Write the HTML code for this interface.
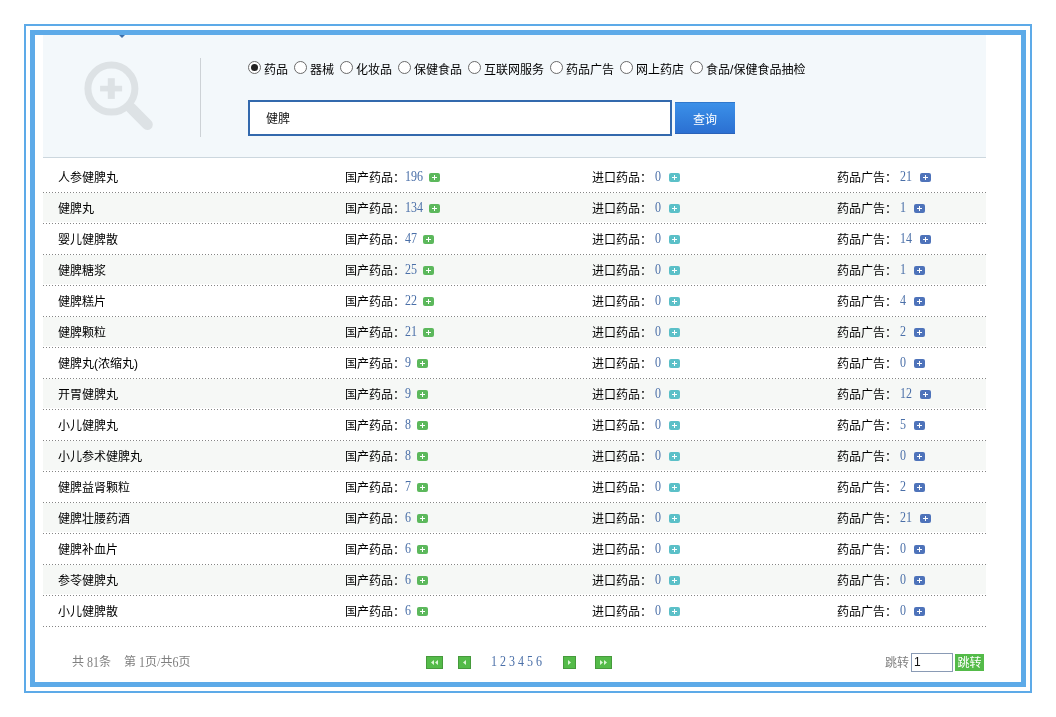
<!DOCTYPE html>
<html lang="zh-CN"><head><meta charset="utf-8"><title>查询</title>
<style>
*{box-sizing:border-box;margin:0;padding:0}
html,body{width:1056px;height:717px;background:#fff;overflow:hidden}
body{font-family:"Liberation Sans","Noto Sans CJK SC",sans-serif;font-size:12px;color:#222;position:relative}
.outer{position:absolute;left:24px;top:24px;width:1008px;height:669px;border:2px solid #5daae8}
.inner{position:absolute;left:30px;top:30px;width:996px;height:657px;border:5px solid #5daae8;background:#fff}
.hd{position:absolute;left:43px;top:35px;width:943px;height:123px;background:#f3f8fb;border-bottom:1px solid #ccd7de}
.tri{position:absolute;left:119px;top:35px;width:0;height:0;border-left:3px solid transparent;border-right:3px solid transparent;border-top:3px solid #3e70aa}
.mag{position:absolute;left:80px;top:57px}
.vl{position:absolute;left:200px;top:58px;width:1px;height:79px;background:#cdd2d6}
.rads{position:absolute;left:242px;top:59px;height:18px;line-height:18px;white-space:nowrap;font-size:12px;color:#000}
.rads label{display:inline-block;vertical-align:top}
.rads label i{font-style:normal;position:relative;top:2px}
.rd{display:inline-block;width:13px;height:13px;border:1px solid #6a6a6a;border-radius:50%;background:#fff;margin:2px 3px 0 6px;vertical-align:top;position:relative}
.rd.on::after{content:"";position:absolute;left:2px;top:2px;width:7px;height:7px;border-radius:50%;background:#222}
.kw{position:absolute;left:248px;top:100px;width:424px;height:36px;border:2px solid #3369ad;background:#fff;padding-left:16px;padding-top:1px;line-height:32px;font-size:12px;color:#111}
.btn{position:absolute;left:675px;top:102px;width:60px;height:32px;background:linear-gradient(#3b90e8,#2b70d2);border-top:1px solid #2f78cc;border-bottom:1px solid #2a62b8;color:#fff;font-size:12px;line-height:34px;text-align:center}
table{position:absolute;left:43px;top:162px;width:943px;border-collapse:collapse;table-layout:fixed}
td{height:31px;background:linear-gradient(to right,#858585 1px,transparent 1px) left bottom/3px 1px repeat-x,linear-gradient(#fff,#fff) left bottom/100% 2px no-repeat;font-size:12px;color:#000;white-space:nowrap;vertical-align:middle;padding:0 0 2px 0}
tr.alt td{background-color:#f6f8f6}
.c1{width:300px;padding-left:15px}
.c2{width:246px;padding-left:2px}
.c3{width:246px;padding-left:3px}
.c4{padding-left:2px}
.c3 a,.c4 a{margin-left:3px}
.c3 .pl,.c4 .pl{margin-left:8px}
td a{font-family:"Liberation Serif",serif;color:#4a6fa8;font-size:12px;display:inline-block;transform:translateY(-0.5px) scaleY(1.14);transform-origin:50% 80%}
.pl{display:inline-block;vertical-align:0px;margin-left:6px}
.pl.g rect{fill:#5cb85c} .pl.t rect{fill:#5bc0c8} .pl.b rect{fill:#4e73ba}
.pg1{position:absolute;left:72px;top:653px;line-height:18px;color:#808080;font-size:12px;white-space:pre}
.pg1 b{font-weight:normal;font-family:"Liberation Serif",serif;display:inline-block;transform:translateY(1.5px) scaleY(1.14);transform-origin:50% 80%}
.pg1 u{text-decoration:none;font-family:"Liberation Serif",serif}
.pg1 span{margin-left:13px}
.nav{position:absolute;top:656px;height:13px;background:#54bb49;border:1px solid #469a3c}
.nums{position:absolute;left:491px;top:654px;line-height:18px;font-family:"Liberation Serif",serif;font-size:12px;color:#4a6fa8;word-spacing:0;white-space:pre;transform:translateY(-0.7px) scaleY(1.13);transform-origin:50% 70%}
.jl{position:absolute;left:885px;top:654px;line-height:18px;color:#808080}
.ji{position:absolute;left:911px;top:653px;width:42px;height:19px;border:1px solid #8a9bb5;background:#fff;font-size:12px;line-height:17px;padding-left:2px;color:#111}
.jb{position:absolute;left:955px;top:654px;width:29px;height:17px;background:#54bb49;color:#fff;font-size:12px;line-height:19px;text-align:center}
.page{position:absolute;left:0;top:0;width:1056px;height:717px;will-change:transform;transform:translateZ(0)}
</style></head><body>
<div class="page">
<div class="outer"></div>
<div class="inner"></div>
<div class="hd"></div>
<div class="tri"></div>
<svg class="mag" width="76" height="76" viewBox="0 0 76 76"><g fill="none" stroke="#dde2e5"><circle cx="31.4" cy="31.6" r="23.5" stroke-width="7"/><path d="M51 51L67.3 67.5" stroke-width="11" stroke-linecap="round"/></g><rect x="20.1" y="28.8" width="22" height="5.6" fill="#dde2e5"/><rect x="27.8" y="21.2" width="7" height="20.7" fill="#dde2e5"/></svg>
<div class="vl"></div>
<div class="rads"><label><span class="rd on"></span><i>药品</i></label><label><span class="rd"></span><i>器械</i></label><label><span class="rd"></span><i>化妆品</i></label><label><span class="rd"></span><i>保健食品</i></label><label><span class="rd"></span><i>互联网服务</i></label><label><span class="rd"></span><i>药品广告</i></label><label><span class="rd"></span><i>网上药店</i></label><label><span class="rd"></span><i>食品/保健食品抽检</i></label></div>
<div class="kw">健脾</div>
<div class="btn">查询</div>
<table>
<tr><td class="c1">人参健脾丸</td><td class="c2">国产药品：<a>196</a><svg class="pl g" width="11" height="9" viewBox="0 0 11 9"><rect width="11" height="9" rx="2" ry="2"/><path d="M5.5 2v5M3 4.5h5" stroke="#fff" stroke-width="1" fill="none"/></svg></td><td class="c3">进口药品：<a>0</a><svg class="pl t" width="11" height="9" viewBox="0 0 11 9"><rect width="11" height="9" rx="2" ry="2"/><path d="M5.5 2v5M3 4.5h5" stroke="#fff" stroke-width="1" fill="none"/></svg></td><td class="c4">药品广告：<a>21</a><svg class="pl b" width="11" height="9" viewBox="0 0 11 9"><rect width="11" height="9" rx="2" ry="2"/><path d="M5.5 2v5M3 4.5h5" stroke="#fff" stroke-width="1" fill="none"/></svg></td></tr>
<tr class="alt"><td class="c1">健脾丸</td><td class="c2">国产药品：<a>134</a><svg class="pl g" width="11" height="9" viewBox="0 0 11 9"><rect width="11" height="9" rx="2" ry="2"/><path d="M5.5 2v5M3 4.5h5" stroke="#fff" stroke-width="1" fill="none"/></svg></td><td class="c3">进口药品：<a>0</a><svg class="pl t" width="11" height="9" viewBox="0 0 11 9"><rect width="11" height="9" rx="2" ry="2"/><path d="M5.5 2v5M3 4.5h5" stroke="#fff" stroke-width="1" fill="none"/></svg></td><td class="c4">药品广告：<a>1</a><svg class="pl b" width="11" height="9" viewBox="0 0 11 9"><rect width="11" height="9" rx="2" ry="2"/><path d="M5.5 2v5M3 4.5h5" stroke="#fff" stroke-width="1" fill="none"/></svg></td></tr>
<tr><td class="c1">婴儿健脾散</td><td class="c2">国产药品：<a>47</a><svg class="pl g" width="11" height="9" viewBox="0 0 11 9"><rect width="11" height="9" rx="2" ry="2"/><path d="M5.5 2v5M3 4.5h5" stroke="#fff" stroke-width="1" fill="none"/></svg></td><td class="c3">进口药品：<a>0</a><svg class="pl t" width="11" height="9" viewBox="0 0 11 9"><rect width="11" height="9" rx="2" ry="2"/><path d="M5.5 2v5M3 4.5h5" stroke="#fff" stroke-width="1" fill="none"/></svg></td><td class="c4">药品广告：<a>14</a><svg class="pl b" width="11" height="9" viewBox="0 0 11 9"><rect width="11" height="9" rx="2" ry="2"/><path d="M5.5 2v5M3 4.5h5" stroke="#fff" stroke-width="1" fill="none"/></svg></td></tr>
<tr class="alt"><td class="c1">健脾糖浆</td><td class="c2">国产药品：<a>25</a><svg class="pl g" width="11" height="9" viewBox="0 0 11 9"><rect width="11" height="9" rx="2" ry="2"/><path d="M5.5 2v5M3 4.5h5" stroke="#fff" stroke-width="1" fill="none"/></svg></td><td class="c3">进口药品：<a>0</a><svg class="pl t" width="11" height="9" viewBox="0 0 11 9"><rect width="11" height="9" rx="2" ry="2"/><path d="M5.5 2v5M3 4.5h5" stroke="#fff" stroke-width="1" fill="none"/></svg></td><td class="c4">药品广告：<a>1</a><svg class="pl b" width="11" height="9" viewBox="0 0 11 9"><rect width="11" height="9" rx="2" ry="2"/><path d="M5.5 2v5M3 4.5h5" stroke="#fff" stroke-width="1" fill="none"/></svg></td></tr>
<tr><td class="c1">健脾糕片</td><td class="c2">国产药品：<a>22</a><svg class="pl g" width="11" height="9" viewBox="0 0 11 9"><rect width="11" height="9" rx="2" ry="2"/><path d="M5.5 2v5M3 4.5h5" stroke="#fff" stroke-width="1" fill="none"/></svg></td><td class="c3">进口药品：<a>0</a><svg class="pl t" width="11" height="9" viewBox="0 0 11 9"><rect width="11" height="9" rx="2" ry="2"/><path d="M5.5 2v5M3 4.5h5" stroke="#fff" stroke-width="1" fill="none"/></svg></td><td class="c4">药品广告：<a>4</a><svg class="pl b" width="11" height="9" viewBox="0 0 11 9"><rect width="11" height="9" rx="2" ry="2"/><path d="M5.5 2v5M3 4.5h5" stroke="#fff" stroke-width="1" fill="none"/></svg></td></tr>
<tr class="alt"><td class="c1">健脾颗粒</td><td class="c2">国产药品：<a>21</a><svg class="pl g" width="11" height="9" viewBox="0 0 11 9"><rect width="11" height="9" rx="2" ry="2"/><path d="M5.5 2v5M3 4.5h5" stroke="#fff" stroke-width="1" fill="none"/></svg></td><td class="c3">进口药品：<a>0</a><svg class="pl t" width="11" height="9" viewBox="0 0 11 9"><rect width="11" height="9" rx="2" ry="2"/><path d="M5.5 2v5M3 4.5h5" stroke="#fff" stroke-width="1" fill="none"/></svg></td><td class="c4">药品广告：<a>2</a><svg class="pl b" width="11" height="9" viewBox="0 0 11 9"><rect width="11" height="9" rx="2" ry="2"/><path d="M5.5 2v5M3 4.5h5" stroke="#fff" stroke-width="1" fill="none"/></svg></td></tr>
<tr><td class="c1">健脾丸(浓缩丸)</td><td class="c2">国产药品：<a>9</a><svg class="pl g" width="11" height="9" viewBox="0 0 11 9"><rect width="11" height="9" rx="2" ry="2"/><path d="M5.5 2v5M3 4.5h5" stroke="#fff" stroke-width="1" fill="none"/></svg></td><td class="c3">进口药品：<a>0</a><svg class="pl t" width="11" height="9" viewBox="0 0 11 9"><rect width="11" height="9" rx="2" ry="2"/><path d="M5.5 2v5M3 4.5h5" stroke="#fff" stroke-width="1" fill="none"/></svg></td><td class="c4">药品广告：<a>0</a><svg class="pl b" width="11" height="9" viewBox="0 0 11 9"><rect width="11" height="9" rx="2" ry="2"/><path d="M5.5 2v5M3 4.5h5" stroke="#fff" stroke-width="1" fill="none"/></svg></td></tr>
<tr class="alt"><td class="c1">开胃健脾丸</td><td class="c2">国产药品：<a>9</a><svg class="pl g" width="11" height="9" viewBox="0 0 11 9"><rect width="11" height="9" rx="2" ry="2"/><path d="M5.5 2v5M3 4.5h5" stroke="#fff" stroke-width="1" fill="none"/></svg></td><td class="c3">进口药品：<a>0</a><svg class="pl t" width="11" height="9" viewBox="0 0 11 9"><rect width="11" height="9" rx="2" ry="2"/><path d="M5.5 2v5M3 4.5h5" stroke="#fff" stroke-width="1" fill="none"/></svg></td><td class="c4">药品广告：<a>12</a><svg class="pl b" width="11" height="9" viewBox="0 0 11 9"><rect width="11" height="9" rx="2" ry="2"/><path d="M5.5 2v5M3 4.5h5" stroke="#fff" stroke-width="1" fill="none"/></svg></td></tr>
<tr><td class="c1">小儿健脾丸</td><td class="c2">国产药品：<a>8</a><svg class="pl g" width="11" height="9" viewBox="0 0 11 9"><rect width="11" height="9" rx="2" ry="2"/><path d="M5.5 2v5M3 4.5h5" stroke="#fff" stroke-width="1" fill="none"/></svg></td><td class="c3">进口药品：<a>0</a><svg class="pl t" width="11" height="9" viewBox="0 0 11 9"><rect width="11" height="9" rx="2" ry="2"/><path d="M5.5 2v5M3 4.5h5" stroke="#fff" stroke-width="1" fill="none"/></svg></td><td class="c4">药品广告：<a>5</a><svg class="pl b" width="11" height="9" viewBox="0 0 11 9"><rect width="11" height="9" rx="2" ry="2"/><path d="M5.5 2v5M3 4.5h5" stroke="#fff" stroke-width="1" fill="none"/></svg></td></tr>
<tr class="alt"><td class="c1">小儿参术健脾丸</td><td class="c2">国产药品：<a>8</a><svg class="pl g" width="11" height="9" viewBox="0 0 11 9"><rect width="11" height="9" rx="2" ry="2"/><path d="M5.5 2v5M3 4.5h5" stroke="#fff" stroke-width="1" fill="none"/></svg></td><td class="c3">进口药品：<a>0</a><svg class="pl t" width="11" height="9" viewBox="0 0 11 9"><rect width="11" height="9" rx="2" ry="2"/><path d="M5.5 2v5M3 4.5h5" stroke="#fff" stroke-width="1" fill="none"/></svg></td><td class="c4">药品广告：<a>0</a><svg class="pl b" width="11" height="9" viewBox="0 0 11 9"><rect width="11" height="9" rx="2" ry="2"/><path d="M5.5 2v5M3 4.5h5" stroke="#fff" stroke-width="1" fill="none"/></svg></td></tr>
<tr><td class="c1">健脾益肾颗粒</td><td class="c2">国产药品：<a>7</a><svg class="pl g" width="11" height="9" viewBox="0 0 11 9"><rect width="11" height="9" rx="2" ry="2"/><path d="M5.5 2v5M3 4.5h5" stroke="#fff" stroke-width="1" fill="none"/></svg></td><td class="c3">进口药品：<a>0</a><svg class="pl t" width="11" height="9" viewBox="0 0 11 9"><rect width="11" height="9" rx="2" ry="2"/><path d="M5.5 2v5M3 4.5h5" stroke="#fff" stroke-width="1" fill="none"/></svg></td><td class="c4">药品广告：<a>2</a><svg class="pl b" width="11" height="9" viewBox="0 0 11 9"><rect width="11" height="9" rx="2" ry="2"/><path d="M5.5 2v5M3 4.5h5" stroke="#fff" stroke-width="1" fill="none"/></svg></td></tr>
<tr class="alt"><td class="c1">健脾壮腰药酒</td><td class="c2">国产药品：<a>6</a><svg class="pl g" width="11" height="9" viewBox="0 0 11 9"><rect width="11" height="9" rx="2" ry="2"/><path d="M5.5 2v5M3 4.5h5" stroke="#fff" stroke-width="1" fill="none"/></svg></td><td class="c3">进口药品：<a>0</a><svg class="pl t" width="11" height="9" viewBox="0 0 11 9"><rect width="11" height="9" rx="2" ry="2"/><path d="M5.5 2v5M3 4.5h5" stroke="#fff" stroke-width="1" fill="none"/></svg></td><td class="c4">药品广告：<a>21</a><svg class="pl b" width="11" height="9" viewBox="0 0 11 9"><rect width="11" height="9" rx="2" ry="2"/><path d="M5.5 2v5M3 4.5h5" stroke="#fff" stroke-width="1" fill="none"/></svg></td></tr>
<tr><td class="c1">健脾补血片</td><td class="c2">国产药品：<a>6</a><svg class="pl g" width="11" height="9" viewBox="0 0 11 9"><rect width="11" height="9" rx="2" ry="2"/><path d="M5.5 2v5M3 4.5h5" stroke="#fff" stroke-width="1" fill="none"/></svg></td><td class="c3">进口药品：<a>0</a><svg class="pl t" width="11" height="9" viewBox="0 0 11 9"><rect width="11" height="9" rx="2" ry="2"/><path d="M5.5 2v5M3 4.5h5" stroke="#fff" stroke-width="1" fill="none"/></svg></td><td class="c4">药品广告：<a>0</a><svg class="pl b" width="11" height="9" viewBox="0 0 11 9"><rect width="11" height="9" rx="2" ry="2"/><path d="M5.5 2v5M3 4.5h5" stroke="#fff" stroke-width="1" fill="none"/></svg></td></tr>
<tr class="alt"><td class="c1">参苓健脾丸</td><td class="c2">国产药品：<a>6</a><svg class="pl g" width="11" height="9" viewBox="0 0 11 9"><rect width="11" height="9" rx="2" ry="2"/><path d="M5.5 2v5M3 4.5h5" stroke="#fff" stroke-width="1" fill="none"/></svg></td><td class="c3">进口药品：<a>0</a><svg class="pl t" width="11" height="9" viewBox="0 0 11 9"><rect width="11" height="9" rx="2" ry="2"/><path d="M5.5 2v5M3 4.5h5" stroke="#fff" stroke-width="1" fill="none"/></svg></td><td class="c4">药品广告：<a>0</a><svg class="pl b" width="11" height="9" viewBox="0 0 11 9"><rect width="11" height="9" rx="2" ry="2"/><path d="M5.5 2v5M3 4.5h5" stroke="#fff" stroke-width="1" fill="none"/></svg></td></tr>
<tr><td class="c1">小儿健脾散</td><td class="c2">国产药品：<a>6</a><svg class="pl g" width="11" height="9" viewBox="0 0 11 9"><rect width="11" height="9" rx="2" ry="2"/><path d="M5.5 2v5M3 4.5h5" stroke="#fff" stroke-width="1" fill="none"/></svg></td><td class="c3">进口药品：<a>0</a><svg class="pl t" width="11" height="9" viewBox="0 0 11 9"><rect width="11" height="9" rx="2" ry="2"/><path d="M5.5 2v5M3 4.5h5" stroke="#fff" stroke-width="1" fill="none"/></svg></td><td class="c4">药品广告：<a>0</a><svg class="pl b" width="11" height="9" viewBox="0 0 11 9"><rect width="11" height="9" rx="2" ry="2"/><path d="M5.5 2v5M3 4.5h5" stroke="#fff" stroke-width="1" fill="none"/></svg></td></tr>
</table>
<div class="pg1">共<u> </u><b>81</b>条<span>第<u> </u><b>1</b>页<u>/</u>共<b>6</b>页</span></div>
<div class="nav" style="left:426px;width:17px"><svg width="15" height="11" viewBox="0 0 15 11"><path d="M7 3v5L4 5.5zM11 3v5L8 5.5z" fill="#dcf6d6"/></svg></div>
<div class="nav" style="left:458px;width:13px"><svg width="11" height="11" viewBox="0 0 11 11"><path d="M7 3v5L4 5.5z" fill="#dcf6d6"/></svg></div>
<div class="nums">1 2 3 4 5 6</div>
<div class="nav" style="left:563px;width:13px"><svg width="11" height="11" viewBox="0 0 11 11"><path d="M4 3v5L7 5.5z" fill="#dcf6d6"/></svg></div>
<div class="nav" style="left:595px;width:17px"><svg width="15" height="11" viewBox="0 0 15 11"><path d="M4 3v5L7 5.5zM8 3v5L11 5.5z" fill="#dcf6d6"/></svg></div>
<div class="jl">跳转</div>
<div class="ji">1</div>
<div class="jb">跳转</div>
</div>
</body></html>
